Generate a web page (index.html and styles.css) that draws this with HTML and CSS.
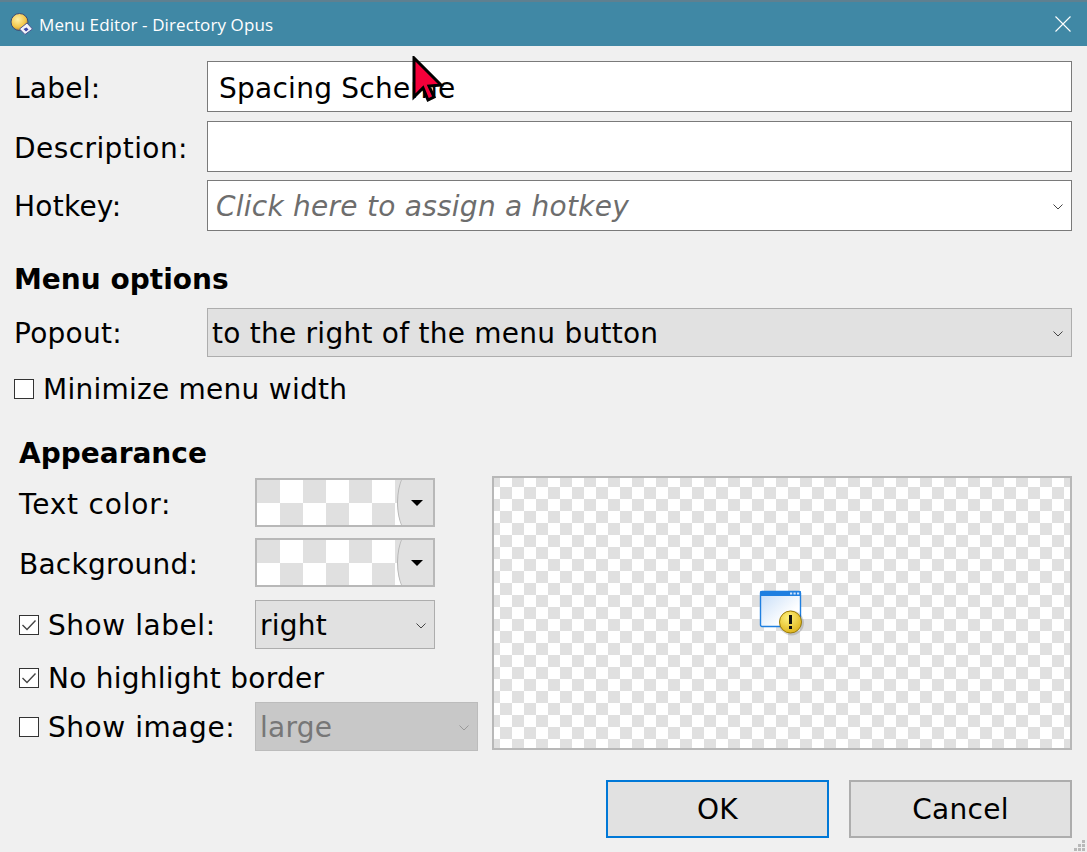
FILE: index.html
```html
<!DOCTYPE html>
<html lang="en">
<head>
<meta charset="utf-8">
<title>Menu Editor - Directory Opus</title>
<link rel="stylesheet" href="styles.css">
</head>
<body>
<div class="window">
  <header class="titlebar">
    <svg class="app-icon" width="24" height="24" viewBox="0 0 24 24">
      <defs><radialGradient id="ball" cx="0.4" cy="0.35" r="0.7"><stop offset="0" stop-color="#fff2a8"/><stop offset="0.65" stop-color="#f2c64a"/><stop offset="1" stop-color="#a87a2a"/></radialGradient></defs>
      <circle cx="10.5" cy="11" r="8.5" fill="url(#ball)" stroke="#3a4a78" stroke-width="1"/>
      <path d="M10.5 18 L18 12 L23.5 18 L16 23.5 Z" fill="#f4f4fa" stroke="#4a5590" stroke-width="1"/>
      <path d="M14.5 18 L17.5 16.5 L19.5 18.5 L17 20.5 Z" fill="#3a44a8"/>
    </svg>
    <span class="title">Menu Editor - Directory Opus</span>
    <svg class="close" width="16" height="16" viewBox="0 0 16 16"><path d="M0.5 0.5 L15.5 15.5 M15.5 0.5 L0.5 15.5" stroke="#fff" stroke-width="1.1" fill="none"/></svg>
  </header>

  <main class="content">
    <div class="field-row label-field"><label class="field-label">Label:</label><div class="box text-box">Spacing Scheme</div></div>
    <div class="field-row"><label class="field-label description">Description:</label><div class="box text-box"></div></div>
    <div class="field-row hotkey"><label class="field-label shift-small">Hotkey:</label>
      <div class="box text-box hint"><span>Click here to assign a hotkey</span>
        <svg class="chev" width="10" height="6" viewBox="0 0 10 6"><path d="M0.5 0.5 L5 5 L9.5 0.5" stroke="#444" fill="none"/></svg></div></div>

    <h2 class="heading menu-heading">Menu options</h2>
    <div class="field-row popout"><label class="field-label shift-small">Popout:</label>
      <div class="box combo wide"><span>to the right of the menu button</span>
        <svg class="chev" width="10" height="6" viewBox="0 0 10 6"><path d="M0.5 0.5 L5 5 L9.5 0.5" stroke="#444" fill="none"/></svg></div></div>
    <div class="check-row minimize"><span class="check"></span><span>Minimize menu width</span></div>

    <section class="appearance">
      <div class="appearance-left">
        <h2 class="heading">Appearance</h2>
        <div class="app-row color-row first-color"><span class="app-label text-color">Text color:</span>
          <div class="swatch"><span class="swatch-btn"><i class="arrow"></i></span></div></div>
        <div class="app-row color-row second-color"><span class="app-label">Background:</span>
          <div class="swatch"><span class="swatch-btn"><i class="arrow"></i></span></div></div>
        <div class="app-row label-row"><span class="check checked"><svg width="16" height="14" viewBox="0 0 16 14"><path d="M1.5 7 L6 11.5 L14.5 2.5" stroke="#444" stroke-width="1.4" fill="none"/></svg></span><span class="app-check-label">Show label:</span>
          <div class="box combo narrow"><span>right</span><svg class="chev" width="10" height="6" viewBox="0 0 10 6"><path d="M0.5 0.5 L5 5 L9.5 0.5" stroke="#444" fill="none"/></svg></div></div>
        <div class="check-row nohl"><span class="check checked"><svg width="16" height="14" viewBox="0 0 16 14"><path d="M1.5 7 L6 11.5 L14.5 2.5" stroke="#444" stroke-width="1.4" fill="none"/></svg></span><span>No highlight border</span></div>
        <div class="app-row image-row"><span class="check"></span><span class="app-check-label">Show image:</span>
          <div class="box combo disabled"><span>large</span><svg class="chev" width="10" height="6" viewBox="0 0 10 6"><path d="M0.5 0.5 L5 5 L9.5 0.5" stroke="#999" fill="none"/></svg></div></div>
      </div>
      <div class="preview">
        <svg class="preview-icon" width="46" height="46" viewBox="0 0 46 46">
          <defs>
            <linearGradient id="win" x1="0" y1="0" x2="1" y2="1"><stop offset="0" stop-color="#c4dcf8"/><stop offset="0.7" stop-color="#ffffff"/></linearGradient>
            <radialGradient id="warn" cx="0.4" cy="0.3" r="0.8"><stop offset="0" stop-color="#fff27e"/><stop offset="1" stop-color="#dcae10"/></radialGradient>
          </defs>
          <rect x="1.5" y="1.5" width="40" height="35" rx="1.5" fill="url(#win)" stroke="#1f7fe0" stroke-width="1.4"/>
          <rect x="1" y="1" width="41" height="5" rx="1" fill="#1f7fe0"/>
          <rect x="31" y="2.5" width="2.2" height="2" fill="#cfe3fb"/><rect x="34.5" y="2.5" width="2.2" height="2" fill="#cfe3fb"/><rect x="38" y="2.5" width="2.2" height="2" fill="#cfe3fb"/>
          <circle cx="32.5" cy="33" r="12.5" fill="#000" opacity=".15"/>
          <circle cx="31.5" cy="32" r="11" fill="url(#warn)" stroke="#9c7c08"/>
          <rect x="30" y="25" width="3" height="9" fill="#111"/><rect x="30" y="36" width="3" height="3" fill="#111"/>
        </svg>
      </div>
    </section>

    <footer class="buttons">
      <button class="btn default">OK</button>
      <button class="btn">Cancel</button>
    </footer>
  </main>

  <svg class="grip" width="11" height="11" viewBox="0 0 11 11"><path d="M8 0h3v3H8zM4 4h3v3H4zM8 4h3v3H8zM0 8h3v3H0zM4 8h3v3H4zM8 8h3v3H8z" fill="#b9b9b9"/></svg>
  <svg class="cursor" width="34" height="48" viewBox="0 0 34 48"><path d="M2 2 L2 41 L11 32 L16 44 L22 41 L17 30 L29 29 Z" fill="#f5003a" stroke="#000" stroke-width="3"/></svg>
</div>
</body>
</html>
```

FILE: styles.css
```css
* { box-sizing: border-box; }
html, body { margin: 0; padding: 0; }
body { width: 1087px; height: 852px; overflow: hidden; background: #f0f0f0; font-family: "DejaVu Sans", sans-serif; font-size: 28px; letter-spacing: 0.25px; color: #000; }
.window { position: relative; width: 1087px; height: 852px; display: flex; flex-direction: column; background: #f0f0f0; }

.titlebar { height: 46px; flex: none; display: flex; align-items: center; padding: 0 16px 0 9px; background: #4088a5; border-top: 2px solid #5f8090; color: #fff; }
.app-icon { flex: none; margin-top: -3px; }
.title { margin-left: 6px; font-family: "Open Sans", sans-serif; font-size: 17px; letter-spacing: 0.1px; color: #fff; }
.close { margin-left: auto; }

.content { flex: 1; padding: 15px 15px 0 14px; display: flex; flex-direction: column; }
.box { border: 1px solid #7a7a7a; height: 51px; display: flex; align-items: center; background: #fff; padding-top: 4px; }
.field-row { display: flex; align-items: center; height: 51px; margin-bottom: 8px; }
.label-field { margin-bottom: 9px; }
.field-label { width: 193px; flex: none; padding-top: 4px; }
.field-label.shift-small { padding-top: 2px; }
.description { letter-spacing: 0.42px; }
.text-box { flex: 1; padding-left: 11px; }
.hint { padding-left: 8px; padding-top: 2px; color: #6d6d6d; font-style: italic; justify-content: space-between; padding-right: 8px; }
.hotkey { margin-bottom: 0; }
.heading { margin: 0; font-size: 28px; font-weight: bold; line-height: 34px; letter-spacing: 0; }
.menu-heading { margin-top: 32px; }
.combo { background: #e1e1e1; border-color: #adadad; justify-content: space-between; padding: 2px 8px 0 4px; }
.chev { flex: none; }
.popout { height: 49px; margin-top: 11px; margin-bottom: 0; }
.wide { flex: 1; height: 49px; }
.check-row { display: flex; align-items: center; height: 34px; }
.check { width: 20px; height: 20px; flex: none; background: #fff; border: 1px solid #333; display: flex; align-items: center; justify-content: center; }
.minimize { margin-top: 15px; gap: 9px; }

.appearance { margin-top: 31px; display: flex; padding-left: 5px; }
.appearance-left { width: 459px; flex: none; }
.app-row { display: flex; align-items: center; }
.color-row { height: 49px; }
.first-color { margin-top: 7px; }
.second-color { margin-top: 11px; }
.app-label { width: 236px; flex: none; padding-top: 4px; }
.text-color { letter-spacing: 0.8px; }
.swatch { width: 180px; height: 49px; border: 2px solid #b8b8b8; position: relative; overflow: hidden; background: repeating-conic-gradient(#fff 0 25%, #e0e0e0 0 50%) 0 0 / 46px 46px; }
.swatch-btn { position: absolute; right: -2px; top: -14px; bottom: -14px; width: 38px; border-radius: 50% 0 0 50% / 50% 0 0 50%; background: #e1e1e1; border-left: 1px solid #b5b5b5; display: flex; align-items: center; justify-content: center; }
.arrow { width: 0; height: 0; border-left: 6px solid transparent; border-right: 6px solid transparent; border-top: 6px solid #000; }
.label-row { height: 49px; margin-top: 13px; }
.app-check-label { margin-left: 9px; width: 207px; flex: none; padding-top: 2px; letter-spacing: 0.55px; }
.narrow { width: 180px; height: 49px; }
.nohl { margin-top: 12px; gap: 9px; }
.image-row { height: 49px; margin-top: 7px; }
.disabled { width: 223px; height: 49px; background: #c8c8c8; border-color: #bcbcbc; color: #777; }

.preview { width: 580px; height: 274px; margin-top: 39px; margin-left: 14px; border: 2px solid #b8b8b8; display: flex; align-items: center; justify-content: center; background: repeating-conic-gradient(#fff 0 25%, #e0e0e0 0 50%) -6px -3px / 24px 24px; }

.buttons { margin-top: 29px; display: flex; justify-content: flex-end; gap: 20px; }
.btn { width: 223px; height: 58px; font: inherit; letter-spacing: inherit; color: #000; background: #e1e1e1; border: 2px solid #adadad; padding: 0; }
.default { border-color: #0078d7; }

.grip { position: absolute; right: 2px; bottom: 1px; }
.cursor { position: absolute; left: 412px; top: 56px; }
```
